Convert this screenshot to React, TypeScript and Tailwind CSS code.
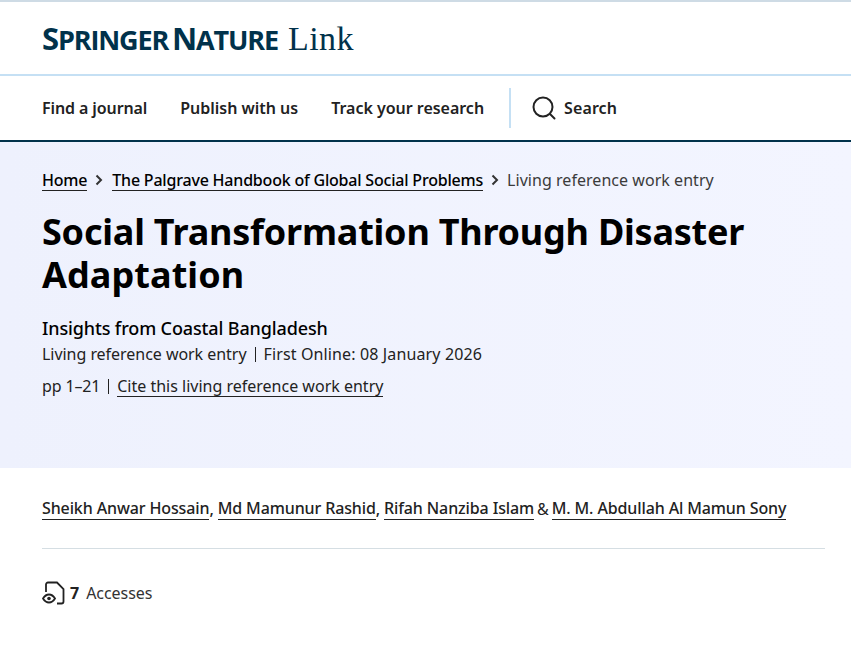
const font = { fontFamily: '"Noto Sans", sans-serif' };

function SearchIcon() {
  return (
    <svg width="24" height="24" viewBox="0 0 24 24" fill="none" stroke="#222222" strokeWidth="2" className="shrink-0">
      <circle cx="11" cy="11" r="9.5" />
      <path d="M18 18l4.5 4.5" strokeLinecap="round" />
    </svg>
  );
}

function AccessIcon() {
  return (
    <svg width="24" height="24" viewBox="0 0 24 24" fill="none" stroke="#222222" strokeWidth="1.8" className="shrink-0">
      <path d="M4 11V3.500a2 2 0 0 1 2-2h9l6.500 6.500v12.500a2 2 0 0 1-2 2h-4.500" />
      <path d="M1 17.500c1.600-2.600 3.800-4 6-4s4.400 1.400 6 4c-1.600 2.600-3.800 4-6 4s-4.400-1.400-6-4z" />
      <circle cx="7" cy="17.500" r="1.800" fill="#222222" stroke="none" />
    </svg>
  );
}

function Chevron() {
  return (
    <svg width="10" height="12" viewBox="0 0 10 12" fill="none" stroke="#333333" strokeWidth="2" className="mx-[7px] shrink-0">
      <path d="M2.500 1.500L7 6l-4.500 4.500" />
    </svg>
  );
}

function NavLink({ label, tight }: { label: string; tight?: boolean }) {
  return (
    <a className={tight ? "text-[16px] font-semibold text-[#222222] tracking-[-0.1px] whitespace-nowrap" : "text-[16px] font-semibold text-[#222222] tracking-[-0.02px] whitespace-nowrap"}>
      {label}
    </a>
  );
}

function AuthorLink({ name }: { name: string }) {
  return <a className="border-b border-[#222222] pb-[1px] leading-[20px] text-[#222222]">{name}</a>;
}

export default function App() {
  return (
    <div className="min-h-[666px] bg-white text-[#222222]" style={font}>
      <header className="h-[76px] border-t-2 border-b-2 border-t-[#cedbe5] border-b-[#c5e0f4] flex items-center px-[42px] pt-[2px]">
        <div className="flex items-baseline text-[#01324b] whitespace-nowrap">
          <span className="font-bold text-[31px] leading-none tracking-[-1.15px]" style={{ fontFamily: '"Open Sans", sans-serif', wordSpacing: "-3px" }}>
            S<span className="text-[27px]">PRINGER</span> N<span className="text-[27px]">ATURE</span>
          </span>
          <span className="ml-[10px] text-[34px] leading-none tracking-[0.5px]" style={{ fontFamily: '"Liberation Serif", serif' }}>Link</span>
        </div>
      </header>

      <nav className="h-[66px] border-b-2 border-[#01324b] flex items-center px-[42px]">
        <div className="flex items-center gap-[33px]">
          <NavLink label="Find a journal" tight />
          <NavLink label="Publish with us" />
          <NavLink label="Track your research" />
        </div>
        <div className="ml-[25px] w-[2px] h-[40px] bg-[#c5e0f4]" />
        <div className="ml-[21px] flex items-center gap-[8px]">
          <SearchIcon />
          <a className="text-[16px] font-semibold text-[#222222] tracking-[0.1px] whitespace-nowrap">Search</a>
        </div>
      </nav>

      <section className="h-[326px] bg-linear-to-r from-[#eef1fd] to-[#f3f5ff] px-[42px] pt-[26px]">
        <div className="flex items-center text-[16px] leading-[24px] whitespace-nowrap">
          <a className="border-b border-[#222222] leading-[20px] font-medium text-black tracking-[-0.2px]">Home</a>
          <Chevron />
          <a className="ml-px border-b border-[#222222] leading-[20px] font-medium text-black tracking-[-0.2px]">The Palgrave Handbook of Global Social Problems</a>
          <Chevron />
          <span className="text-[#3b3b3b] tracking-[0.04px]">Living reference work entry</span>
        </div>
        <h1 className="mt-[18px] text-[36px] leading-[43px] font-bold text-black tracking-[-0.22px]">
          <span className="block">Social Transformation Through Disaster</span>
          <span className="block tracking-[0.08px]">Adaptation</span>
        </h1>
        <p className="mt-[20px] text-[18px] leading-[24px] font-medium text-black tracking-[-0.13px]">Insights from Coastal Bangladesh</p>
        <div className="mt-[2px] flex items-center text-[16px] leading-[24px] whitespace-nowrap">
          <span className="tracking-[-0.04px]">Living reference work entry</span>
          <span className="mx-[8px] w-px h-[15px] bg-[#222222]" />
          <span className="tracking-[0.13px]">First Online: 08 January 2026</span>
        </div>
        <div className="mt-[8px] flex items-center text-[16px] leading-[24px] whitespace-nowrap">
          <span className="tracking-[-0.15px]">pp 1–21</span>
          <span className="mx-[8px] w-px h-[15px] bg-[#222222]" />
          <a className="border-b border-[#222222] leading-[20px]">Cite this living reference work entry</a>
        </div>
      </section>

      <section className="mx-[42px] w-[783px]">
        <div className="pt-[29px] pb-[27px] border-b border-[#d5dee3] flex items-center text-[16px] tracking-[-0.12px] font-medium whitespace-nowrap">
          <AuthorLink name="Sheikh Anwar Hossain" />
          <span>,&nbsp;</span>
          <AuthorLink name="Md Mamunur Rashid" />
          <span>,&nbsp;</span>
          <AuthorLink name="Rifah Nanziba Islam" />
          <span className="font-normal mx-[3px]">&amp;</span>
          <AuthorLink name="M. M. Abdullah Al Mamun Sony" />
        </div>
        <div className="mt-[32px] flex items-center text-[16px] leading-[24px] whitespace-nowrap">
          <AccessIcon />
          <span className="ml-[4px] font-bold">7</span>
          <span className="ml-[7px] text-[#333333] tracking-[-0.05px]">Accesses</span>
        </div>
      </section>
    </div>
  );
}
